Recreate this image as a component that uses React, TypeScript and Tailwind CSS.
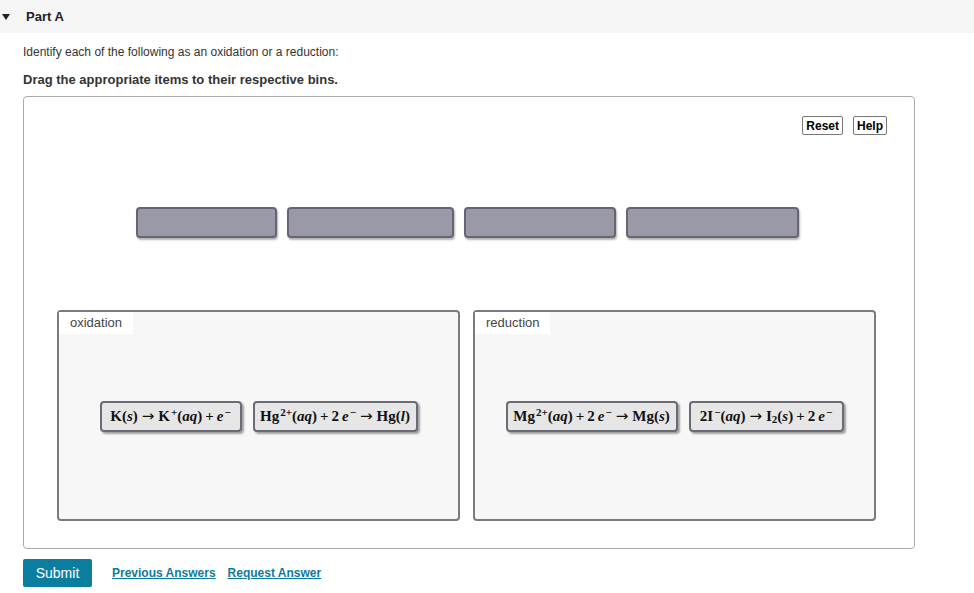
import React from 'react';

const targets = [141, 167, 152, 173];

const mathFont = { fontFamily: '"Liberation Serif", "DejaVu Serif", serif' };

const Sup: React.FC<{ children: React.ReactNode }> = ({ children }) => (
  <sup className="text-[11px] -top-[5px] ml-[1px]">{children}</sup>
);

const Sub: React.FC<{ children: React.ReactNode }> = ({ children }) => (
  <sub className="text-[11px]">{children}</sub>
);

const I: React.FC<{ children: React.ReactNode }> = ({ children }) => <i>{children}</i>;

const Op: React.FC<{ children: React.ReactNode }> = ({ children }) => (
  <span className="mx-[3px]">{children}</span>
);

const Arrow: React.FC = () => (
  <span className="mx-[4px] text-[15px] font-normal" style={{ fontFamily: '"DejaVu Sans", sans-serif' }}>→</span>
);

const Item: React.FC<{ width: number; children: React.ReactNode }> = ({ width, children }) => (
  <div
    className="h-[31px] flex items-center justify-center bg-[#e6e6e6] border-2 border-[#6b6b75] rounded-[4px] shadow-[2px_2px_2px_rgba(0,0,0,0.35)] text-[15px] font-bold text-[#111] whitespace-nowrap leading-none"
    style={{ width, ...mathFont }}
  >
    {children}
  </div>
);

const Bin: React.FC<{ label: string; children: React.ReactNode }> = ({ label, children }) => (
  <div className="w-[403px] h-[211px] border-2 border-[#7a7a82] rounded-[4px] bg-[#f7f7f7] flex flex-col">
    <div className="self-start bg-white h-[22px] px-[11px] flex items-center text-[13px] text-[#444]">{label}</div>
    <div className="flex justify-center gap-[11px] mt-[67px]">{children}</div>
  </div>
);

export default function App() {
  return (
    <div className="w-[974px] h-[593px] bg-white text-[#333]" style={{ fontFamily: '"Liberation Sans", Arial, sans-serif' }}>
      <div className="h-[33px] bg-[#f5f5f5] flex items-center">
        <span className="ml-[2px] w-0 h-0 border-l-[4px] border-r-[4px] border-t-[6px] border-l-transparent border-r-transparent border-t-[#222]" />
        <span className="ml-[16px] text-[13px] font-bold text-[#222]">Part A</span>
      </div>

      <div className="pl-[23px]">
        <p className="mt-[12px] text-[12px] leading-[14px]">Identify each of the following as an oxidation or a reduction:</p>
        <p className="mt-[13px] text-[13px] font-bold leading-[16px]">Drag the appropriate items to their respective bins.</p>

        <div className="mt-[8px] w-[892px] h-[453px] border border-[#aaa] rounded-[4px] flex flex-col">
          <div className="flex justify-end gap-[10px] mt-[19px] mr-[27px]">
            <button className="h-[19px] px-[3px] border border-[#777] rounded-[2px] bg-white text-[12px] font-bold text-black leading-none">Reset</button>
            <button className="h-[19px] px-[3px] border border-[#777] rounded-[2px] bg-white text-[12px] font-bold text-black leading-none">Help</button>
          </div>

          <div className="flex justify-center gap-[10px] mt-[72px] mr-[4px]">
            {targets.map((w, i) => (
              <div
                key={i}
                className="h-[31px] bg-[#9a99a8] border-2 border-[#67666f] rounded-[4px] shadow-[1px_2px_2px_rgba(0,0,0,0.3)]"
                style={{ width: w }}
              />
            ))}
          </div>

          <div className="flex gap-[13px] ml-[33px] mt-[72px]">
            <Bin label="oxidation">
              <Item width={142}>
                K(<I>s</I>)<Arrow />K<Sup>+</Sup>(<I>aq</I>)<Op>+</Op><I>e</I><Sup>−</Sup>
              </Item>
              <Item width={165}>
                Hg<Sup>2+</Sup>(<I>aq</I>)<Op>+</Op>2&thinsp;<I>e</I><Sup>−</Sup><Arrow />Hg(<I>l</I>)
              </Item>
            </Bin>
            <Bin label="reduction">
              <Item width={172}>
                Mg<Sup>2+</Sup>(<I>aq</I>)<Op>+</Op>2&thinsp;<I>e</I><Sup>−</Sup><Arrow />Mg(<I>s</I>)
              </Item>
              <Item width={155}>
                2I<Sup>−</Sup>(<I>aq</I>)<Arrow />I<Sub>2</Sub>(<I>s</I>)<Op>+</Op>2&thinsp;<I>e</I><Sup>−</Sup>
              </Item>
            </Bin>
          </div>
        </div>

        <div className="flex items-center mt-[10px]">
          <button className="w-[69px] h-[28px] bg-[#0b7ea0] text-white text-[14px] rounded-[2px]">Submit</button>
          <a className="ml-[20px] text-[12px] font-bold text-[#107a9c] underline">Previous Answers</a>
          <a className="ml-[12px] text-[12px] font-bold text-[#107a9c] underline">Request Answer</a>
        </div>
      </div>
    </div>
  );
}
